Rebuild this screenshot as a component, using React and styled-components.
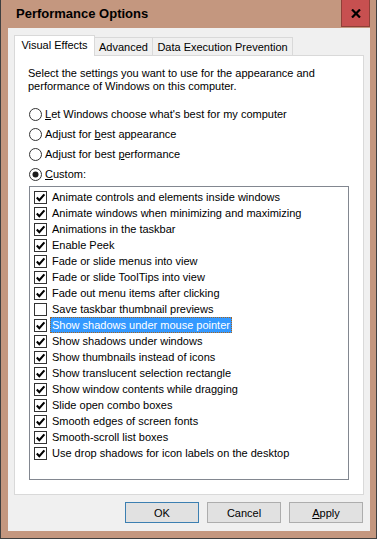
import styled, { createGlobalStyle } from "styled-components";

const GlobalStyle = createGlobalStyle`
    html, body {
        margin: 0;
        padding: 0;
        background: #c4977f;
    }
    body {
        font-family: "Liberation Sans", Arial, sans-serif;
        font-size: 11px;
        color: #000;
    }
`;

const effects = [
    { label: "Animate controls and elements inside windows", on: true },
    { label: "Animate windows when minimizing and maximizing", on: true },
    { label: "Animations in the taskbar", on: true },
    { label: "Enable Peek", on: true },
    { label: "Fade or slide menus into view", on: true },
    { label: "Fade or slide ToolTips into view", on: true },
    { label: "Fade out menu items after clicking", on: true },
    { label: "Save taskbar thumbnail previews", on: false },
    { label: "Show shadows under mouse pointer", on: true, selected: true },
    { label: "Show shadows under windows", on: true },
    { label: "Show thumbnails instead of icons", on: true },
    { label: "Show translucent selection rectangle", on: true },
    { label: "Show window contents while dragging", on: true },
    { label: "Slide open combo boxes", on: true },
    { label: "Smooth edges of screen fonts", on: true },
    { label: "Smooth-scroll list boxes", on: true },
    { label: "Use drop shadows for icon labels on the desktop", on: true },
];

function Radio({ checked, children }) {
    return (
        <RadioRow>
            <svg width="13" height="13" viewBox="0 0 13 13">
                <circle cx="6.5" cy="6.5" r="6" fill="#fff" stroke="#333" strokeWidth="1" />
                {checked && <circle cx="6.5" cy="6.5" r="3" fill="#1a1a1a" />}
            </svg>
            <span>{children}</span>
        </RadioRow>
    );
}

function CheckItem({ on, selected, children }) {
    return (
        <CheckRow>
            <CheckBox>
                {on && (
                    <svg width="11" height="11" viewBox="0 0 11 11">
                        <path d="M1.8 5.6 L4.3 8.2 L9.4 2.4" fill="none" stroke="#000" strokeWidth="2.1" />
                    </svg>
                )}
            </CheckBox>
            <ItemLabel selected={selected}>{children}</ItemLabel>
        </CheckRow>
    );
}

export default function App() {
    return (
        <>
            <GlobalStyle />
            <Window>
                <TitleBar>
                    <Title>Performance Options</Title>
                    <CloseButton>
                        <svg width="10" height="9" viewBox="0 0 10 9">
                            <path d="M1 0.5 L9 8.5 M9 0.5 L1 8.5" stroke="#000" strokeWidth="2.2" />
                        </svg>
                    </CloseButton>
                </TitleBar>
                <Client>
                    <TabStrip>
                        <Tab active width={81}>Visual Effects</Tab>
                        <Tab width={58}>Advanced</Tab>
                        <Tab width={140}>Data Execution Prevention</Tab>
                    </TabStrip>
                    <Panel>
                        <Intro>
                            Select the settings you want to use for the appearance and
                            <br />
                            performance of Windows on this computer.
                        </Intro>
                        <RadioGroup>
                            <Radio>
                                <u>L</u>et Windows choose what's best for my computer
                            </Radio>
                            <Radio>
                                Adjust for <u>b</u>est appearance
                            </Radio>
                            <Radio>
                                Adjust for best <u>p</u>erformance
                            </Radio>
                            <Radio checked>
                                <u>C</u>ustom:
                            </Radio>
                        </RadioGroup>
                        <ListBox>
                            {effects.map((e) => (
                                <CheckItem key={e.label} on={e.on} selected={e.selected}>
                                    {e.label}
                                </CheckItem>
                            ))}
                        </ListBox>
                    </Panel>
                    <Buttons>
                        <Button primary>OK</Button>
                        <Button>Cancel</Button>
                        <Button>
                            <u>A</u>pply
                        </Button>
                    </Buttons>
                </Client>
            </Window>
        </>
    );
}

const Window = styled.div`
    width: 377px;
    height: 539px;
    box-sizing: border-box;
    background: #c4977f;
    border: 1px solid #3f3f3f;
    border-top: none;
    padding: 0 6px 7px 7px;
    display: flex;
    flex-direction: column;
`;

const TitleBar = styled.div`
    height: 28px;
    display: flex;
    align-items: flex-start;
    justify-content: space-between;
`;

const Title = styled.div`
    font-weight: bold;
    font-size: 13px;
    line-height: 28px;
    padding-left: 8px;
`;

const CloseButton = styled.div`
    width: 29px;
    height: 27px;
    box-sizing: border-box;
    background: #c75050;
    border: 1px solid #8e4038;
    border-top: none;
    display: flex;
    align-items: center;
    justify-content: center;
`;

const Client = styled.div`
    flex: 1;
    background: #f0f0f0;
    padding: 7px 7px 8px 6px;
    display: flex;
    flex-direction: column;
`;

const TabStrip = styled.div`
    height: 20px;
    display: flex;
    align-items: flex-end;
`;

const Tab = styled.div`
    position: relative;
    z-index: ${(p) => (p.active ? 1 : 0)};
    width: ${(p) => p.width}px;
    height: ${(p) => (p.active ? 21 : 18)}px;
    margin-bottom: ${(p) => (p.active ? -1 : 0)}px;
    box-sizing: border-box;
    background: ${(p) => (p.active ? "#fff" : "#f0f0f0")};
    border: 1px solid #d9d9d9;
    border-bottom: none;
    border-left: ${(p) => (p.active ? "1px solid #d9d9d9" : "none")};
    display: flex;
    align-items: center;
    justify-content: center;
    padding-bottom: ${(p) => (p.active ? 3 : 0)}px;
    font-size: 11px;
    white-space: nowrap;
`;

const Panel = styled.div`
    width: 350px;
    height: 440px;
    box-sizing: border-box;
    background: #fff;
    border: 1px solid #d9d9d9;
    padding: 11px 14px 14px 13px;
    display: flex;
    flex-direction: column;
`;

const Intro = styled.p`
    margin: 0;
    line-height: 13px;
    white-space: nowrap;
`;

const RadioGroup = styled.div`
    margin-top: 11px;
    display: flex;
    flex-direction: column;
`;

const RadioRow = styled.div`
    height: 20px;
    display: flex;
    align-items: center;
    gap: 2px;
    padding-left: 1px;
    white-space: nowrap;
    svg {
        flex: none;
    }
    span {
        padding-left: 1px;
    }
`;

const ListBox = styled.div`
    margin: 2px 0 0 1px;
    flex: 1;
    box-sizing: border-box;
    border: 1px solid #828790;
    padding: 2px 0 0 4px;
    display: flex;
    flex-direction: column;
`;

const CheckRow = styled.div`
    height: 16px;
    display: flex;
    align-items: center;
    gap: 3px;
    white-space: nowrap;
`;

const CheckBox = styled.div`
    width: 13px;
    height: 13px;
    box-sizing: border-box;
    border: 1px solid #333;
    background: #fff;
    display: flex;
    align-items: center;
    justify-content: center;
    flex: none;
`;

const ItemLabel = styled.span`
    height: 16px;
    box-sizing: border-box;
    line-height: 14px;
    padding: 0 1px;
    border: 1px ${(p) => (p.selected ? "dotted #a8641e" : "solid transparent")};
    background: ${(p) => (p.selected ? "#3399ff" : "transparent")};
    color: ${(p) => (p.selected ? "#fff" : "#000")};
`;

const Buttons = styled.div`
    margin-top: 7px;
    display: flex;
    justify-content: flex-end;
    gap: 8px;
`;

const Button = styled.div`
    width: 74px;
    height: 21px;
    box-sizing: border-box;
    background: #e1e1e1;
    border: 1px solid ${(p) => (p.primary ? "#3c7fb1" : "#adadad")};
    display: flex;
    align-items: center;
    justify-content: center;
    font-size: 11px;
`;
